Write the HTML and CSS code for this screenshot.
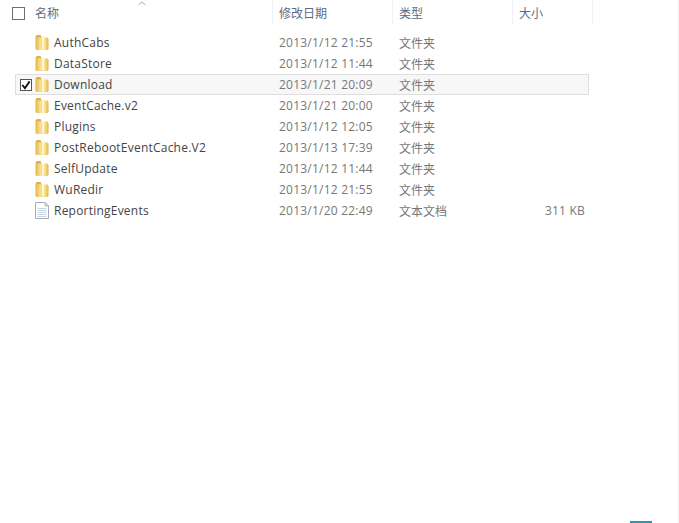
FILE: index.html
```html
<!DOCTYPE html>
<html lang="zh">
<head>
<meta charset="utf-8">
<title>文件列表</title>
<link rel="stylesheet" href="styles.css">
</head>
<body>
<svg width="0" height="0" class="defs">
  <defs>
    <linearGradient id="fg" x1="0" y1="0" x2="1" y2="0">
      <stop offset="0" stop-color="#e3b54a"/>
      <stop offset=".3" stop-color="#f5d97e"/>
      <stop offset=".55" stop-color="#fdf1b8"/>
      <stop offset=".8" stop-color="#f4d676"/>
      <stop offset="1" stop-color="#e3b349"/>
    </linearGradient>
    <symbol id="folder" viewBox="0 0 16 17">
      <path d="M1.5 3 3 1h3.5l1 2.5H13.500l1 1.500v10l-1 1h-11l-1-1z" fill="url(#fg)"/>
      <path d="M7.600 3.500 10 1.800v12.500L7.600 16z" fill="#fff8dc"/>
      <path d="M7.600 3.500V16" stroke="#ecc868" stroke-width=".6" fill="none"/>
      <path d="M1.500 3 3 1h3.500l1 2.500z" fill="#dcb04a"/>
    </symbol>
    <symbol id="doc" viewBox="0 0 16 17">
      <path d="M1.500.5h9.500l3.500 3.500v12.500h-13z" fill="#fff" stroke="#a6aeb6"/>
      <path d="M11 .5v3.500h3.500z" fill="#e3e8ec" stroke="#a6aeb6" stroke-width=".8"/>
      <path d="M3.500 6.500h9M3.500 8.500h9M3.500 10.500h9M3.500 12.500h9M3.500 14.500h9" stroke="#c6d5e4"/>
    </symbol>
  </defs>
</svg>
<main class="view">
  <header class="head">
    <div class="cell-h name-h">
      <span class="box"></span>
      <span class="h-label">名称</span>
      <svg class="sort" width="8" height="5" viewBox="0 0 8 5"><path d="M.5 4 4 1l3.500 3" fill="none" stroke="#9fb0c4"/></svg>
    </div>
    <div class="cell-h date-h"><span class="h-label">修改日期</span></div>
    <div class="cell-h type-h"><span class="h-label">类型</span></div>
    <div class="cell-h size-h"><span class="h-label">大小</span></div>
  </header>
  <section class="rows">
    <div class="row"><span class="check"></span><svg class="ico"><use href="#folder"/></svg><span class="name">AuthCabs</span><span class="date">2013/1/12 21:55</span><span class="type">文件夹</span><span class="size"></span></div>
    <div class="row"><span class="check"></span><svg class="ico"><use href="#folder"/></svg><span class="name">DataStore</span><span class="date">2013/1/12 11:44</span><span class="type">文件夹</span><span class="size"></span></div>
    <div class="row row-on"><span class="check check-on"><svg width="10" height="10" viewBox="0 0 11 11"><path d="M1.500 5.500 4.300 9 9.500 1.500" fill="none" stroke="#111" stroke-width="2"/></svg></span><svg class="ico"><use href="#folder"/></svg><span class="name">Download</span><span class="date">2013/1/21 20:09</span><span class="type">文件夹</span><span class="size"></span></div>
    <div class="row"><span class="check"></span><svg class="ico"><use href="#folder"/></svg><span class="name">EventCache.v2</span><span class="date">2013/1/21 20:00</span><span class="type">文件夹</span><span class="size"></span></div>
    <div class="row"><span class="check"></span><svg class="ico"><use href="#folder"/></svg><span class="name">Plugins</span><span class="date">2013/1/12 12:05</span><span class="type">文件夹</span><span class="size"></span></div>
    <div class="row"><span class="check"></span><svg class="ico"><use href="#folder"/></svg><span class="name">PostRebootEventCache.V2</span><span class="date">2013/1/13 17:39</span><span class="type">文件夹</span><span class="size"></span></div>
    <div class="row"><span class="check"></span><svg class="ico"><use href="#folder"/></svg><span class="name">SelfUpdate</span><span class="date">2013/1/12 11:44</span><span class="type">文件夹</span><span class="size"></span></div>
    <div class="row"><span class="check"></span><svg class="ico"><use href="#folder"/></svg><span class="name">WuRedir</span><span class="date">2013/1/12 21:55</span><span class="type">文件夹</span><span class="size"></span></div>
    <div class="row"><span class="check"></span><svg class="ico"><use href="#doc"/></svg><span class="name">ReportingEvents</span><span class="date">2013/1/20 22:49</span><span class="type">文本文档</span><span class="size">311 KB</span></div>
  </section>
  <div class="spacer"></div>
  <footer class="foot"><span class="blue"></span></footer>
</main>
</body>
</html>
```
FILE: styles.css
```css
* { box-sizing: border-box; }
html, body { margin: 0; padding: 0; height: 100%; background: #fff; }
body { overflow: hidden; font-family: "Open Sans", "Noto Sans CJK SC", sans-serif; font-size: 12px; letter-spacing: .22px; }
.defs { display: block; height: 0; }
.view { display: flex; flex-direction: column; height: 523px; width: 679px; border-right: 1px solid #f0f0f0; }
.head { display: grid; grid-template-columns: 273px 120px 120px 80px; height: 24px; }
.cell-h { display: flex; align-items: center; padding: 2px 0 0 6px; border-right: 1px solid #eef1f5; height: 24px; position: relative; }
.name-h { padding-left: 12px; }
.box { width: 13px; height: 13px; border: 1px solid #6e6e6e; margin: 1px 10px 0 0; flex: none; }
.h-label { color: #5a6c84; font-family: "Noto Sans CJK SC", sans-serif; font-size: 12px; line-height: 16px; letter-spacing: 0; }
.sort { position: absolute; left: 138px; top: 1px; }
.rows { display: flex; flex-direction: column; padding-top: 8px; width: 589px; }
.row { display: grid; grid-template-columns: 14px 20px 225px 120px 120px 66px; align-items: center; height: 21px; margin-left: 15px; padding-left: 4px; border: 1px solid transparent; border-width: 1px 0 1px 1px; color: #666; }
.row-on { background: #f7f7f7; border: 1px solid #dedede; }
.check { width: 12px; height: 12px; display: flex; align-items: center; justify-content: center; }
.check-on { border: 1px solid #555; background: #fff; }
.ico { width: 16px; height: 17px; }
.name { color: #444; line-height: 16px; white-space: nowrap; }
.date { line-height: 16px; white-space: nowrap; color: #777; }
.type { font-family: "Noto Sans CJK SC", sans-serif; line-height: 16px; color: #777; letter-spacing: 0; }
.size { text-align: right; line-height: 16px; color: #777; white-space: nowrap; }
.spacer { flex: 1; }
.foot { display: flex; justify-content: flex-end; height: 2px; padding-right: 26px; }
.blue { width: 22px; height: 2px; background: #2f93b4; }
```
